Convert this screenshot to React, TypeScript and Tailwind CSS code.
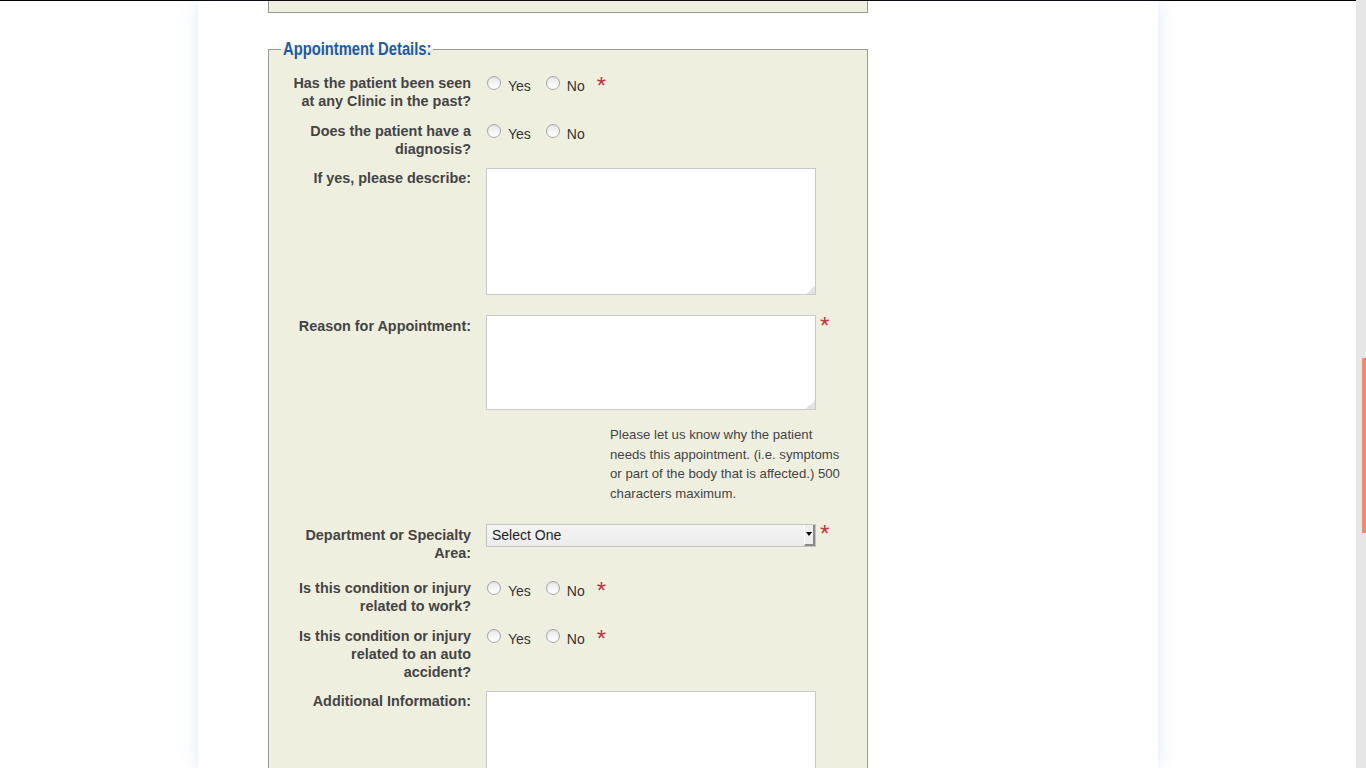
import type { ReactNode } from 'react';

const Star = ({ className = '' }: { className?: string }) => (
  <span className={`block text-[24px] leading-none text-[#c4303c] ${className}`}>*</span>
);

const Radio = ({ label, className = '' }: { label: string; className?: string }) => (
  <label className={`flex items-start ${className}`}>
    <span className="-mt-[1px] h-[14px] w-[14px] shrink-0 rounded-full border border-[#a6a6a6] bg-gradient-to-b from-[#e9e9e9] to-white shadow-[inset_0_1px_1px_rgba(0,0,0,0.06)]" />
    <span className="ml-[7px] text-[14px] leading-[18px] text-[#333]">{label}</span>
  </label>
);

const YesNo = ({ required }: { required?: boolean }) => (
  <div className="ml-[1px] mt-[3px] flex items-start">
    <Radio label="Yes" />
    <Radio label="No" className="ml-[15px]" />
    {required && <Star className="-mt-[3px] ml-[12px]" />}
  </div>
);

const Row = ({
  label,
  className = '',
  labelClass = '',
  children,
}: {
  label: string;
  className?: string;
  labelClass?: string;
  children: ReactNode;
}) => (
  <div className={`flex items-start ${className}`}>
    <div className={`ml-[8px] w-[182px] shrink-0 text-right text-[14.4px] font-bold leading-[18px] text-[#444] ${labelClass}`}>
      {label}
    </div>
    <div className="ml-[15px] flex items-start">{children}</div>
  </div>
);

const Box = ({ h }: { h: string }) => (
  <div className="relative">
    <textarea readOnly className={`block w-[330px] resize-none border border-[#c9c9c9] bg-white ${h}`} />
    <span className="absolute bottom-[1px] right-[1px] h-[9px] w-[9px] bg-[linear-gradient(135deg,transparent_50%,#e4e4e4_50%)]" />
  </div>
);

export default function App() {
  return (
    <div className="flex h-[768px] w-full overflow-hidden bg-white font-['Liberation_Sans',Arial,sans-serif] text-[#444]">
      <div className="flex-1 border-t border-black">
        <div className="mx-auto h-full w-[960px] bg-white pl-[70px] shadow-[0_0_18px_rgba(110,150,200,0.22)]">
          <div className="h-[12px] w-[600px] border-x border-b border-[#999] bg-[#efefe0]" />

          <fieldset className="mt-[26px] w-[600px] border border-[#999] bg-[#efefe0] pb-[40px] pl-[12px]">
            <legend className="w-[152px] px-[2px] text-[18px] font-bold leading-[20px] text-[#1a5ca6]">
              <span className="inline-block origin-left scale-x-[0.82] whitespace-nowrap">Appointment Details:</span>
            </legend>

            <Row label="Has the patient been seen at any Clinic in the past?" className="mt-[15px]">
              <YesNo required />
            </Row>

            <Row label="Does the patient have a diagnosis?" className="mt-[12px]">
              <YesNo />
            </Row>

            <Row label="If yes, please describe:" className="mt-[10px]" labelClass="mt-[1px]">
              <Box h="h-[127px]" />
            </Row>

            <Row label="Reason for Appointment:" className="mt-[20px]" labelClass="mt-[2px]">
              <Box h="h-[95px]" />
              <Star className="ml-[4px] -mt-[1px]" />
            </Row>

            <p className="ml-[329px] mt-[15px] w-[238px] text-[13.2px] leading-[19.7px] text-[#444]">
              Please let us know why the patient needs this appointment. (i.e. symptoms or part of the body that is affected.) 500 characters maximum.
            </p>

            <Row label="Department or Specialty Area:" className="mt-[20px]" labelClass="mt-[2px]">
              <div className="flex h-[23px] w-[330px] items-stretch border border-[#c4c4c4] bg-gradient-to-b from-[#f4f4f4] to-[#ececec] text-[14px] text-[#222]">
                <span className="flex-1 self-center pl-[5px]">Select One</span>
                <span className="flex w-[11px] items-center justify-center border-b-2 border-l border-r-2 border-b-[#8a8a8a] border-l-white border-r-[#8a8a8a] bg-[#eeeeee]">
                  <span className="h-0 w-0 border-l-[3px] border-r-[3px] border-t-[4px] border-l-transparent border-r-transparent border-t-black" />
                </span>
              </div>
              <Star className="ml-[4px] -mt-[2px]" />
            </Row>

            <Row label="Is this condition or injury related to work?" className="mt-[17px]">
              <YesNo required />
            </Row>

            <Row label="Is this condition or injury related to an auto accident?" className="mt-[12px]">
              <YesNo required />
            </Row>

            <Row label="Additional Information:" className="mt-[10px]" labelClass="mt-[1px]">
              <Box h="h-[127px]" />
            </Row>
          </fieldset>
        </div>
      </div>

      <div className="flex w-[10px] flex-col items-end bg-[#e6e6e6]">
        <div className="mt-[358px] h-[175px] w-[4px] bg-[#ef8c64]" />
      </div>
    </div>
  );
}
